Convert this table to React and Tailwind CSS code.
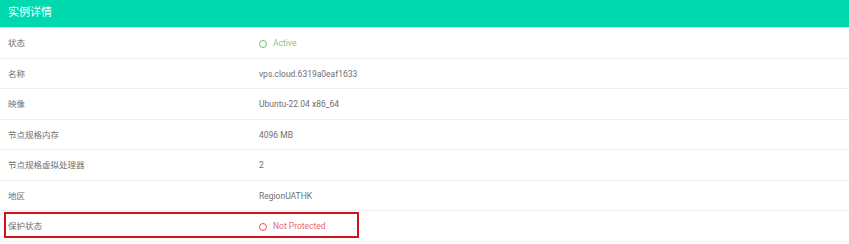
import React from "react";

const rows = [
  { label: "状态", value: "Active", status: "ok" },
  { label: "名称", value: "vps.cloud.6319a0eaf1633" },
  { label: "映像", value: "Ubuntu-22.04 x86_64" },
  { label: "节点规格内存", value: "4096 MB" },
  { label: "节点规格虚拟处理器", value: "2" },
  { label: "地区", value: "RegionUATHK" },
  { label: "保护状态", value: "Not Protected", status: "bad" },
];

function Dot({ color }) {
  return <span className={`inline-block w-[8px] h-[8px] rounded-full border-[1.6px] mr-[6px] ${color}`} />;
}

export default function App() {
  return (
    <div className="relative w-[849px] h-[244px] bg-white overflow-hidden" style={{ fontFamily: "Roboto, 'Noto Sans CJK SC', sans-serif" }}>
      <div className="h-[28px] bg-[#00d8ae] border-b border-[#bff3ea] flex items-center px-[8px]">
        <span className="text-white text-[11px]">实例详情</span>
      </div>
      {rows.map((r) => (
        <div key={r.label} className="h-[30.5px] flex items-center pt-[2px] border-b border-[#f0f0f2] text-[8.5px]">
          <div className="w-[259px] pl-[8px] text-[#6f6f6f]">{r.label}</div>
          <div className="flex items-center">
            {r.status === "ok" && <Dot color="border-[#6cc06c]" />}
            {r.status === "bad" && <Dot color="border-[#e0555a]" />}
            <span
              className={
                r.status === "ok"
                  ? "text-[#82c982]"
                  : r.status === "bad"
                  ? "text-[#e46b70]"
                  : "text-[#6f6f6f]"
              }
            >
              {r.value}
            </span>
          </div>
        </div>
      ))}
      <div className="absolute left-[4px] top-[212px] w-[355px] h-[26px] border-2 border-[#d0121b]" />
    </div>
  );
}
